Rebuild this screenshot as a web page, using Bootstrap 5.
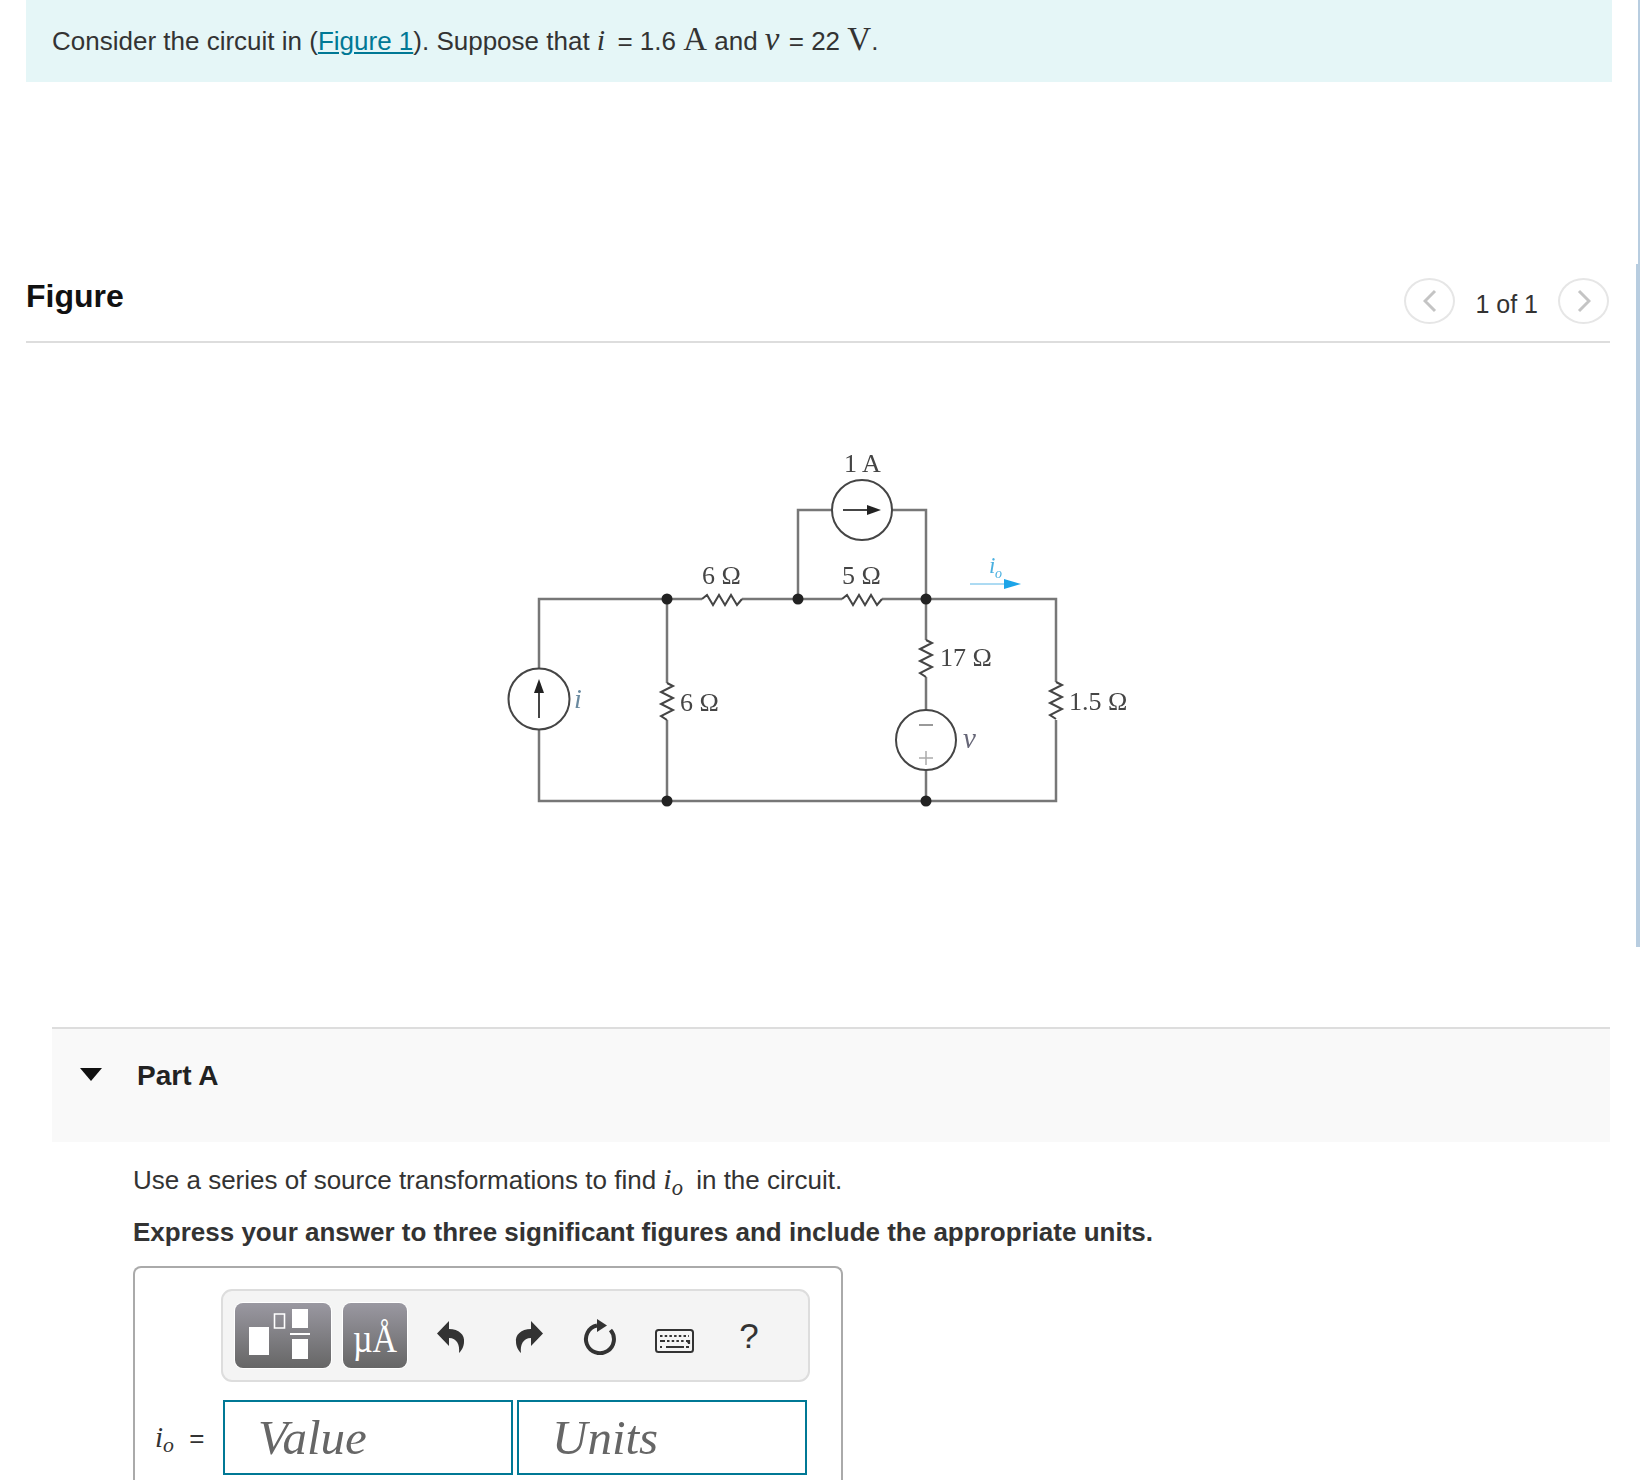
<!DOCTYPE html>
<html lang="en">
<head>
<meta charset="utf-8">
<title>Circuit problem</title>
<link href="https://cdn.jsdelivr.net/npm/bootstrap@5.3.0/dist/css/bootstrap.min.css" rel="stylesheet">
<style>
html,body{height:1481px;overflow:hidden;background:#fff}
body{font-family:"Liberation Sans",Arial,sans-serif;color:#333;font-size:26px;line-height:1.2;position:relative}
.mth{font-family:"Liberation Serif",serif;font-style:italic;font-size:30px;line-height:1}
.mth-v{font-size:33px;margin-right:2px}
.pad-r{margin-right:5px}
.rm{font-family:"Liberation Serif",serif;font-size:33px;line-height:1}
.intro{margin-left:26px;width:1586px;height:82px;background:#e5f6f7;padding-left:26px;line-height:82px;white-space:nowrap}
.intro a{color:#007895}
.fig-head{margin:196px 0 0 26px;width:1584px;height:65px;border-bottom:2px solid #ddd}
.fig-head h2{font-size:32px;font-weight:700;color:#111;margin:0;line-height:36px}
.pager{font-size:25px;color:#333;gap:20px;margin-right:1px}
.pager span{padding-top:6px}
.pg-btn{width:51px;height:46px;border:2px solid #e6e6e6;border-radius:50%;background:#fff;padding:0}
.circuit{display:block;margin-left:500px;margin-top:89px}
.part-band{margin:195px 0 0 52px;width:1558px;height:115px;background:#f9f9f9;border-top:2px solid #ddd;padding:28px 0 0 28px;gap:35px}
.part-band h3{font-size:28px;font-weight:700;color:#222;margin:1px 0 0;line-height:36px}
.tri{width:0;height:0;border-left:11px solid transparent;border-right:11px solid transparent;border-top:13px solid #111;margin-top:11px}
.body-text{margin-left:133px}
.body-text p{margin:0;white-space:nowrap}
.p1{padding-top:22px;height:67px;line-height:32px}
.p1 .mth{margin-right:6px}
.p2{font-weight:700;line-height:32px;height:57px;padding-top:7px;box-sizing:border-box}
.answer{width:710px;height:214px;border:2px solid #aaa;border-bottom:0;border-radius:8px 8px 0 0;padding:21px 0 0 86px}
.tools{width:589px;height:93px;background:#f4f4f4;border:2px solid #ddd;border-radius:11px;padding:12px;overflow:hidden}
.tbtn{height:65px;border-radius:8px;background:linear-gradient(#9a98a1,#666);border:0;padding:0;box-shadow:0 0 0 1px #fff;display:block;flex:none}
.tbtn.w1{width:96px;margin-right:12px}
.tbtn.w2{width:64px}
.plain-icons{height:65px;padding:2px 0 0 30px}
.ic-redo{margin-left:50px}
.ic-reset{margin-left:40px}
.ic-kbd{margin-left:39px;margin-top:9px}
.q{font-size:35px;color:#333;width:26px;text-align:center;line-height:36px;margin:-2px 0 0 42px}
.eqn{margin-top:18px;margin-left:-66px;align-items:center}
.lbl{width:68px;font-size:26px;white-space:nowrap;padding-top:2px}
.lbl .mth{font-size:29px;margin-right:8px}
.val{width:290px;height:75px;border:2px solid #007895;border-radius:0;font-family:"Liberation Serif",serif;font-style:italic;font-size:49px;padding:0 0 0 33px;color:#666;background:#fff;outline:none}
.val::placeholder{color:#666;opacity:1}
.val+.val{margin-left:4px}
.sbar{position:absolute;right:0;top:264px;width:4px;height:683px;background:#b8cde0}
.sbar-track{position:absolute;right:0;top:0;width:2px;height:264px;background:#b8cde0}
svg text{font-family:"Liberation Serif",serif}
</style>
</head>
<body>
<div class="sbar-track"></div>
<div class="sbar"></div>
<div class="intro">Consider the circuit in (<a href="#">Figure 1</a>). Suppose that <span class="mth pad-r">i</span> = 1.6 <span class="rm">A</span> and <span class="mth mth-v">v</span> = 22 <span class="rm">V</span>.</div>

<div class="fig-head d-flex justify-content-between align-items-start">
  <h2>Figure</h2>
  <div class="pager d-flex align-items-center">
    <button class="pg-btn d-flex align-items-center justify-content-center" aria-label="Previous"><svg width="14" height="24" viewBox="0 0 14 24"><path d="M12 2 2 12l10 10" fill="none" stroke="#c4c4c4" stroke-width="3"/></svg></button>
    <span>1 of 1</span>
    <button class="pg-btn d-flex align-items-center justify-content-center" aria-label="Next"><svg width="14" height="24" viewBox="0 0 14 24"><path d="M2 2l10 10L2 22" fill="none" stroke="#c4c4c4" stroke-width="3"/></svg></button>
  </div>
</div>

<svg class="circuit" width="640" height="400" viewBox="500 432 640 400">
  <defs><filter id="soft" x="-5%" y="-5%" width="110%" height="110%"><feGaussianBlur stdDeviation="0.6"/></filter></defs>
  <g filter="url(#soft)">
    <g fill="none" stroke="#777" stroke-width="2.500">
      <path d="M539 668V599H702M742 599H842M882 599H1056V682M1056 720V801H539V730"/>
      <path d="M798 599V510H832M892 510H926V599"/>
      <path d="M926 599V640M926 677V710M926 770V801"/>
      <path d="M667 599V683M667 720V801"/>
    </g>
    <g fill="none" stroke="#444" stroke-width="2">
      <circle cx="539" cy="699" r="30.500"/><circle cx="862" cy="510" r="30"/><circle cx="926" cy="740" r="30"/>
      <path d="M702 599l5-4 6 10 6-10 6 10 6-10 6 10 5-6"/>
      <path d="M842 599l5-4 6 10 6-10 6 10 6-10 6 10 5-6"/>
      <path d="M667 683l6 3-12 6 12 6-12 6 12 6-12 6 6 4"/>
      <path d="M926 640l6 3-12 6 12 6-12 6 12 6-12 6 6 4"/>
      <path d="M1056 682l6 3-12 6 12 6-12 6 12 6-12 6 6 4"/>
      <path d="M539 718V692"/><path d="M843 510h28"/>
    </g>
    <path d="M539 679l-5 14h10z" fill="#222"/>
    <path d="M881 510l-14-5v10z" fill="#222"/>
    <path d="M919 725h14" stroke="#777" stroke-width="1.500"/>
    <path d="M919 758h14M926 751v14" stroke="#aaa" stroke-width="1.500"/>
    <g fill="#222">
      <circle cx="667" cy="599" r="5.500"/><circle cx="798" cy="599" r="5.500"/><circle cx="926" cy="599" r="5.500"/>
      <circle cx="667" cy="801" r="5.500"/><circle cx="926" cy="801" r="5.500"/>
    </g>
    <path d="M970 584h38" stroke="#5ab6e6" stroke-width="1"/>
    <path d="M1021 584l-17-5v10z" fill="#1aa4e8"/>
    <g font-size="26" fill="#444">
      <text x="844" y="472">1 A</text>
      <text x="702" y="584">6 Ω</text>
      <text x="842" y="584">5 Ω</text>
      <text x="680" y="711">6 Ω</text>
      <text x="940" y="666">17 Ω</text>
      <text x="1069" y="710">1.5 Ω</text>
    </g>
    <text x="574" y="708" font-size="28" font-style="italic" fill="#6a8aa0">i</text>
    <text x="963" y="748" font-size="29" font-style="italic" fill="#667">v</text>
    <text x="989" y="573" font-size="23" font-style="italic" fill="#49b0e0">i</text>
    <text x="995" y="578" font-size="14" font-style="italic" fill="#49b0e0">o</text>
  </g>
</svg>

<div class="part-band d-flex align-items-start">
  <span class="tri"></span>
  <h3>Part A</h3>
</div>

<div class="body-text">
  <p class="p1">Use a series of source transformations to find <span class="mth">i<sub>o</sub></span> in the circuit.</p>
  <p class="p2">Express your answer to three significant figures and include the appropriate units.</p>
  <div class="answer">
    <div class="tools d-flex align-items-start">
      <button class="tbtn w1" aria-label="Templates"><svg width="96" height="65" viewBox="0 0 96 65"><path fill="#fff" d="M14 24h20v28H14zM57 6h16v19H57zM57 36h16v20H57zM55 30h20v2H55z"/><path fill="none" stroke="#fff" stroke-width="1.600" d="M39.500 11h10v14h-10z"/></svg></button>
      <button class="tbtn w2" aria-label="Symbols"><svg width="64" height="65" viewBox="0 0 64 65"><text x="32" y="41" text-anchor="middle" font-size="34" fill="#fff" transform="scale(1 1.2)">µÅ</text></svg></button>
      <div class="plain-icons d-flex align-items-center">
        <svg width="28" height="32" viewBox="0 0 28 32" aria-label="Undo"><path fill="#333" d="M0 12.500 12 0v8C22 8 28 14 27 21 27 26 24 30 22 32 23 24 20 17 12 17v8z"/></svg>
        <svg class="ic-redo" width="28" height="32" viewBox="0 0 28 32" aria-label="Redo"><path fill="#333" d="M28 12.500 16 0v8C6 8 0 14 1 21c0 5 3 9 5 11C5 24 8 17 16 17v8z"/></svg>
        <svg class="ic-reset" width="33" height="36" viewBox="0 0 33 36" aria-label="Reset"><path fill="none" stroke="#333" stroke-width="4" d="M14 6.500A14 14 0 1 0 27.500 11"/><path fill="#333" d="M14 0l10 6.500L14 13z"/></svg>
        <svg class="ic-kbd" width="39" height="24" viewBox="0 0 39 24" aria-label="Keyboard"><rect x="1" y="1" width="37" height="22" rx="2.500" fill="none" stroke="#333" stroke-width="2"/><path stroke="#333" stroke-width="2.200" stroke-dasharray="2.500 2.200" d="M5 7h29M12 12h17"/><path stroke="#333" stroke-width="2.200" d="M5 12h5M31 12h3v3M11 18h18M5 18h2M31 18h3"/></svg>
        <span class="q">?</span>
      </div>
    </div>
    <div class="eqn d-flex">
      <div class="lbl"><span class="mth">i<sub>o</sub></span> =</div>
      <input class="val" type="text" placeholder="Value" aria-label="Value">
      <input class="val" type="text" placeholder="Units" aria-label="Units">
    </div>
  </div>
</div>
<script src="https://cdn.jsdelivr.net/npm/bootstrap@5.3.0/dist/js/bootstrap.bundle.min.js"></script>
</body>
</html>
